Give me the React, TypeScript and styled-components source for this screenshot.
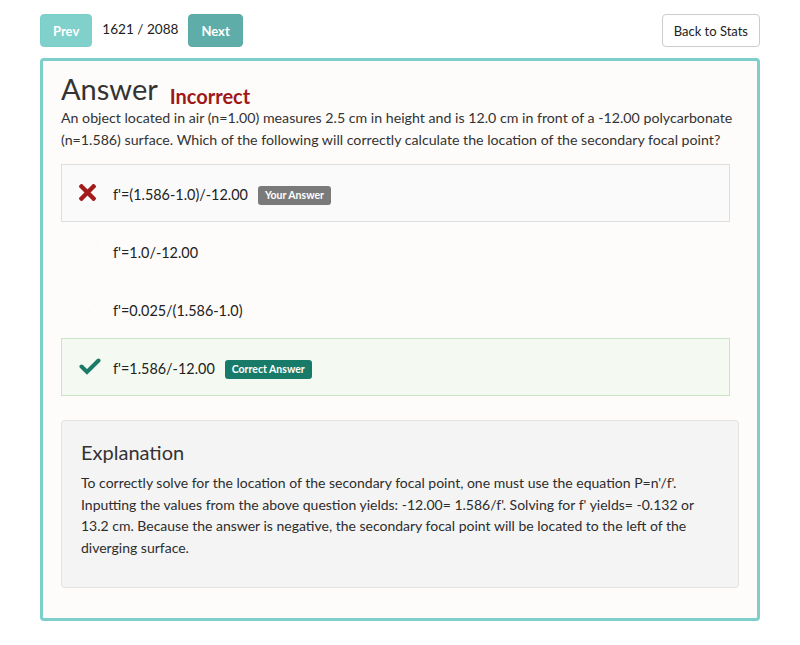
import React from "react";
import styled, { createGlobalStyle } from "styled-components";

const Global = createGlobalStyle`
  html, body { margin: 0; padding: 0; background: #ffffff; }
  body { font-family: Lato, "Open Sans", sans-serif; color: #333; }
  * { box-sizing: border-box; }
`;

const Page = styled.div`
  width: 800px;
  padding: 14px 40px 24px 40px;
`;

const Toolbar = styled.div`
  display: flex;
  align-items: center;
  height: 33px;
  margin-bottom: 11px;
`;

const NavButton = styled.button<{ $dim?: boolean }>`
  height: 33px;
  padding: 0 12px;
  border: 1px solid ${(p) => (p.$dim ? "#7bcfcb" : "#5aaba6")};
  border-radius: 4px;
  background: ${(p) => (p.$dim ? "#80d0cc" : "#5eada8")};
  color: #fff;
  font-family: Lato, sans-serif;
  font-weight: 700;
  font-size: 13px;
`;

const Counter = styled.span`
  font-size: 13.6px;
  color: #222;
  margin: 0 10px;
  position: relative;
  top: -2px;
`;

const Spacer = styled.div`
  flex: 1;
`;

const BackButton = styled.button`
  height: 33px;
  padding: 0 11px;
  border: 1px solid #ccc;
  border-radius: 4px;
  background: #fff;
  color: #222;
  font-family: Lato, sans-serif;
  font-size: 13px;
`;

const Panel = styled.div`
  border: 3px solid #7dcfcc;
  border-radius: 4px;
  background: #fdfcfa;
  padding: 10px 18px 30px 18px;
`;

const TitleRow = styled.div`
  display: flex;
  align-items: baseline;
`;

const Title = styled.h1`
  margin: 0;
  font-size: 29px;
  font-weight: 400;
  color: #333;
  line-height: 36px;
`;

const Verdict = styled.span`
  margin-left: 12px;
  font-size: 20px;
  font-weight: 700;
  color: #a01818;
  position: relative;
  top: 4px;
`;

const Question = styled.p`
  margin: 0 0 13px 0;
  font-size: 14.2px;
  line-height: 22px;
  color: #333;
`;

const Options = styled.div`
  display: flex;
  flex-direction: column;
  margin-right: 9px;
`;

const Option = styled.div<{ $state?: "wrong" | "right" }>`
  display: flex;
  align-items: center;
  height: 58px;
  padding: 2px 0 0 17px;
  border: 1px solid
    ${(p) =>
      p.$state === "wrong" ? "#dedede" : p.$state === "right" ? "#cbe5c4" : "transparent"};
  background: ${(p) =>
    p.$state === "wrong" ? "#fafafa" : p.$state === "right" ? "#f4faf1" : "transparent"};
`;

const IconBox = styled.span`
  width: 34px;
  display: flex;
  align-items: center;
  margin-top: -3px;
`;

const OptionText = styled.span`
  font-size: 14.4px;
  color: #222;
`;

const Badge = styled.span<{ $kind: "yours" | "correct" }>`
  margin: 2px 0 0 10px;
  padding: 3px 7px;
  border-radius: 3px;
  background: ${(p) => (p.$kind === "yours" ? "#7a7a7a" : "#187a68")};
  color: #fff;
  font-size: 10.5px;
  font-weight: 700;
  line-height: 13px;
`;

const Explanation = styled.div`
  margin-top: 24px;
  background: #f4f4f4;
  border: 1px solid #e3e3e3;
  border-radius: 4px;
  padding: 19px 19px 28px 19px;
`;

const ExplTitle = styled.h2`
  margin: 0 0 8px 0;
  font-size: 20px;
  font-weight: 400;
  color: #333;
  line-height: 24px;
`;

const ExplText = styled.p`
  margin: 0;
  font-size: 14px;
  line-height: 21.7px;
  color: #2d2d2d;
`;

const Cross = ({ color = "#a31a1a" }: { color?: string }) => (
  <svg width="17" height="17" viewBox="0 0 17 17">
    <path d="M2.5 2.5 L14.5 14.5 M14.5 2.5 L2.5 14.5" stroke={color} strokeWidth="4.4" strokeLinecap="square" />
  </svg>
);

const Check = ({ color }: { color: string }) => (
  <svg width="22" height="17" viewBox="0 0 22 17">
    <path d="M2.5 8.5 L8 14 L19.5 2.5" stroke={color} strokeWidth="4" fill="none" strokeLinecap="round" strokeLinejoin="miter" />
  </svg>
);

export default function App() {
  return (
    <Page>
      <Global />
      <Toolbar>
        <NavButton $dim>Prev</NavButton>
        <Counter>1621 / 2088</Counter>
        <NavButton>Next</NavButton>
        <Spacer />
        <BackButton>Back to Stats</BackButton>
      </Toolbar>
      <Panel>
        <TitleRow>
          <Title>Answer</Title>
          <Verdict>Incorrect</Verdict>
        </TitleRow>
        <Question>
          An object located in air (n=1.00) measures 2.5 cm in height and is 12.0 cm in front of a -12.00 polycarbonate
          (n=1.586) surface. Which of the following will correctly calculate the location of the secondary focal point?
        </Question>
        <Options>
          <Option $state="wrong">
            <IconBox><Cross /></IconBox>
            <OptionText>f'=(1.586-1.0)/-12.00</OptionText>
            <Badge $kind="yours">Your Answer</Badge>
          </Option>
          <Option>
            <IconBox><Check color="#fbfbfb" /></IconBox>
            <OptionText>f'=1.0/-12.00</OptionText>
          </Option>
          <Option>
            <IconBox><Check color="#fbfbfb" /></IconBox>
            <OptionText>f'=0.025/(1.586-1.0)</OptionText>
          </Option>
          <Option $state="right">
            <IconBox><Check color="#1b7a68" /></IconBox>
            <OptionText>f'=1.586/-12.00</OptionText>
            <Badge $kind="correct">Correct Answer</Badge>
          </Option>
        </Options>
        <Explanation>
          <ExplTitle>Explanation</ExplTitle>
          <ExplText>
            To correctly solve for the location of the secondary focal point, one must use the equation P=n'/f'.
            Inputting the values from the above question yields: -12.00= 1.586/f'. Solving for f' yields= -0.132 or
            13.2 cm. Because the answer is negative, the secondary focal point will be located to the left of the
            diverging surface.
          </ExplText>
        </Explanation>
      </Panel>
    </Page>
  );
}
